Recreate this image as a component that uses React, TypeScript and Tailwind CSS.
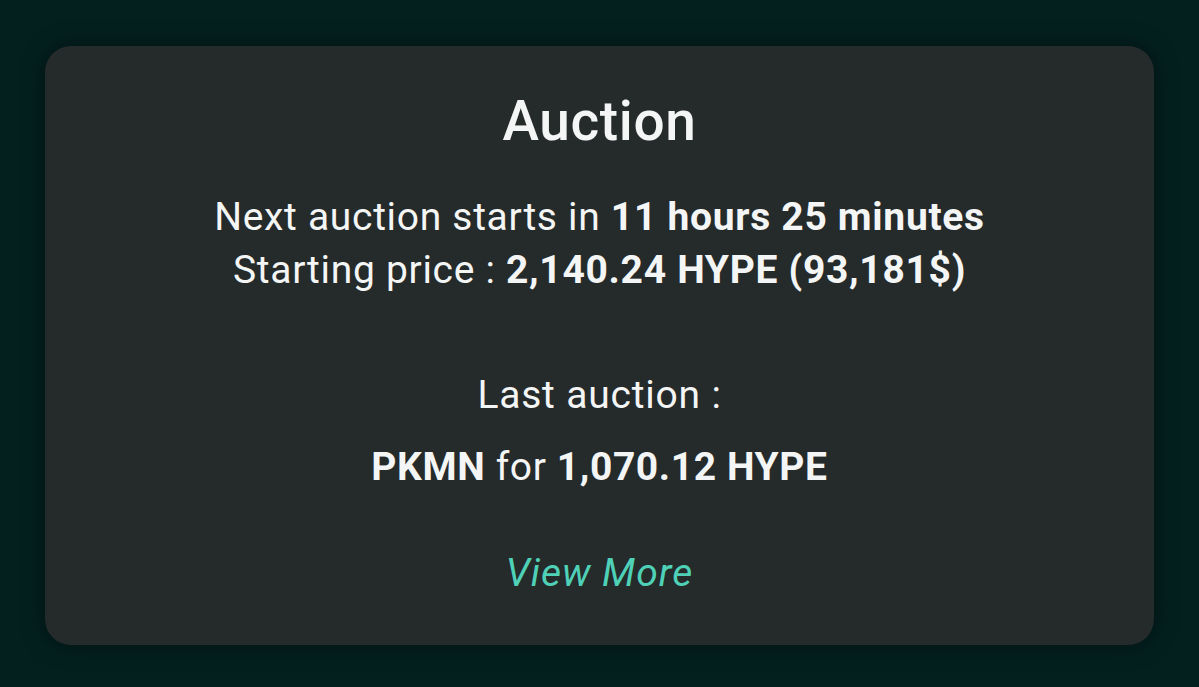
import React from 'react';

export default function App() {
  return (
    <div className="min-h-[687px] w-full bg-[#03201f] px-[45px] pt-[46px] pb-[42px] font-['Roboto',sans-serif]">
      <div className="rounded-[26px] bg-[#252a2a] shadow-[0_0_24px_rgba(0,0,0,0.45)] h-[599px] flex flex-col items-center text-[#f4f5f5]">
        <h2 className="mt-[48px] text-[55px] leading-none font-medium tracking-[0.6px]">Auction</h2>

        <div className="mt-[42px] text-center text-[39px] leading-[53px] tracking-[0.7px]">
          <p>
            Next auction starts in <span className="font-bold">11 hours 25 minutes</span>
          </p>
          <p>
            Starting price : <span className="font-bold">2,140.24 HYPE (93,181$)</span>
          </p>
        </div>

        <p className="mt-[72px] text-[39px] leading-[53px] tracking-[0.8px]">Last auction :</p>
        <p className="mt-[19px] text-[39px] leading-[53px] tracking-[0.6px]">
          <span className="font-bold">PKMN</span> for <span className="font-bold">1,070.12 HYPE</span>
        </p>

        <a className="mt-[53px] text-[39px] leading-[53px] italic text-[#4fd1b8] tracking-[1px] cursor-pointer">View More</a>
      </div>
    </div>
  );
}
